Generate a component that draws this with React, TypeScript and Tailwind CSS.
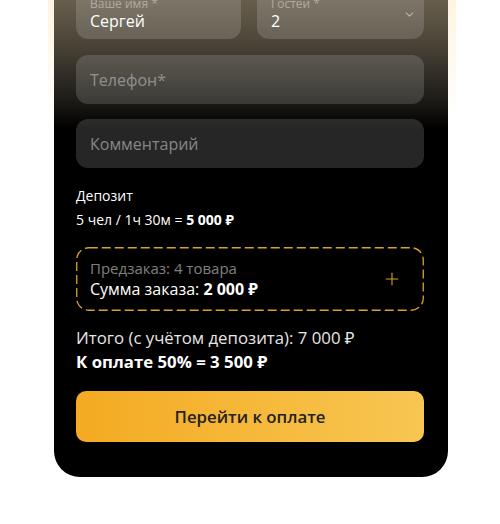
import { ChevronDown, Plus } from "lucide-react";

export default function App() {
  return (
    <div
      className="w-[500px] h-[524px] bg-white overflow-hidden"
      style={{ fontFamily: '"Open Sans", "Noto Sans", sans-serif' }}
    >
      <div className="ml-[48px] w-[408px] pl-[6px] pr-[8px] bg-[linear-gradient(180deg,#fff3df_0px,#fff8ec_60px,#ffffff_130px)]">
        <div className="rounded-b-[26px] bg-[linear-gradient(180deg,#6e6552_0px,#4e473a_50px,#1e1c18_110px,#000000_140px)] pl-[22px] pr-[24px] pb-[35px]">
          {/* Name + guests */}
          <div className="-mt-[11px] flex gap-[16px]">
            <div className="h-[50px] w-[165px] rounded-[12px] bg-white/15 px-[14px] flex flex-col justify-center">
              <span className="text-[12px] leading-[14px] text-white/40">Ваше имя *</span>
              <span className="text-[16px] leading-[21px] text-white">Сергей</span>
            </div>
            <div className="relative h-[50px] flex-1 rounded-[12px] bg-white/15 px-[14px] flex flex-col justify-center">
              <span className="text-[12px] leading-[14px] text-white/40">Гостей *</span>
              <span className="text-[16px] leading-[21px] text-white">2</span>
              <ChevronDown className="absolute right-[8px] top-[19px] w-[13px] h-[13px] text-white/50" strokeWidth={2} />
            </div>
          </div>

          <div className="mt-[16px] h-[49px] rounded-[12px] bg-white/15 px-[14px] flex items-center text-[16px] text-white/40">
            Телефон*
          </div>
          <div className="mt-[15px] h-[49px] rounded-[12px] bg-white/15 px-[14px] flex items-center text-[16px] text-white/45">
            Комментарий
          </div>

          {/* Deposit */}
          <div className="mt-[16px] text-[14px] leading-[24px] text-white">
            <div>Депозит</div>
            <div>
              5 чел / 1ч 30м = <span className="font-bold">5 000 ₽</span>
            </div>
          </div>

          {/* Preorder */}
          <div className="relative mt-[15px] h-[64px] pl-[14px] pr-[22px] flex items-center justify-between">
            <svg className="absolute inset-0 w-full h-full pointer-events-none" preserveAspectRatio="none">
              <rect
                x="0.75"
                y="0.75"
                width="calc(100% - 1.5px)"
                height="calc(100% - 1.5px)"
                rx="12"
                fill="none"
                stroke="#d9a22e"
                strokeWidth="1.3"
                strokeDasharray="9 4"
              />
            </svg>
            <div className="flex flex-col">
              <span className="text-[15px] leading-[20px] text-white/50">Предзаказ: 4 товара</span>
              <span className="text-[16px] leading-[22px] text-white">
                Сумма заказа: <span className="font-bold">2 000 ₽</span>
              </span>
            </div>
            <Plus className="w-[20px] h-[20px] text-[#d9a32a]" strokeWidth={1.3} />
          </div>

          {/* Totals */}
          <div className="mt-[15px] text-[16.8px] leading-[24px] text-[#e6e6e6]">
            <div>Итого (с учётом депозита): 7 000 ₽</div>
            <div className="font-bold text-white">К оплате 50% = 3 500 ₽</div>
          </div>

          <button className="mt-[17px] w-full h-[51px] rounded-[10px] bg-[linear-gradient(90deg,#f4aa22,#f8c652)] text-[16.8px] font-semibold text-[#222222]">
            Перейти к оплате
          </button>
        </div>
      </div>
    </div>
  );
}
